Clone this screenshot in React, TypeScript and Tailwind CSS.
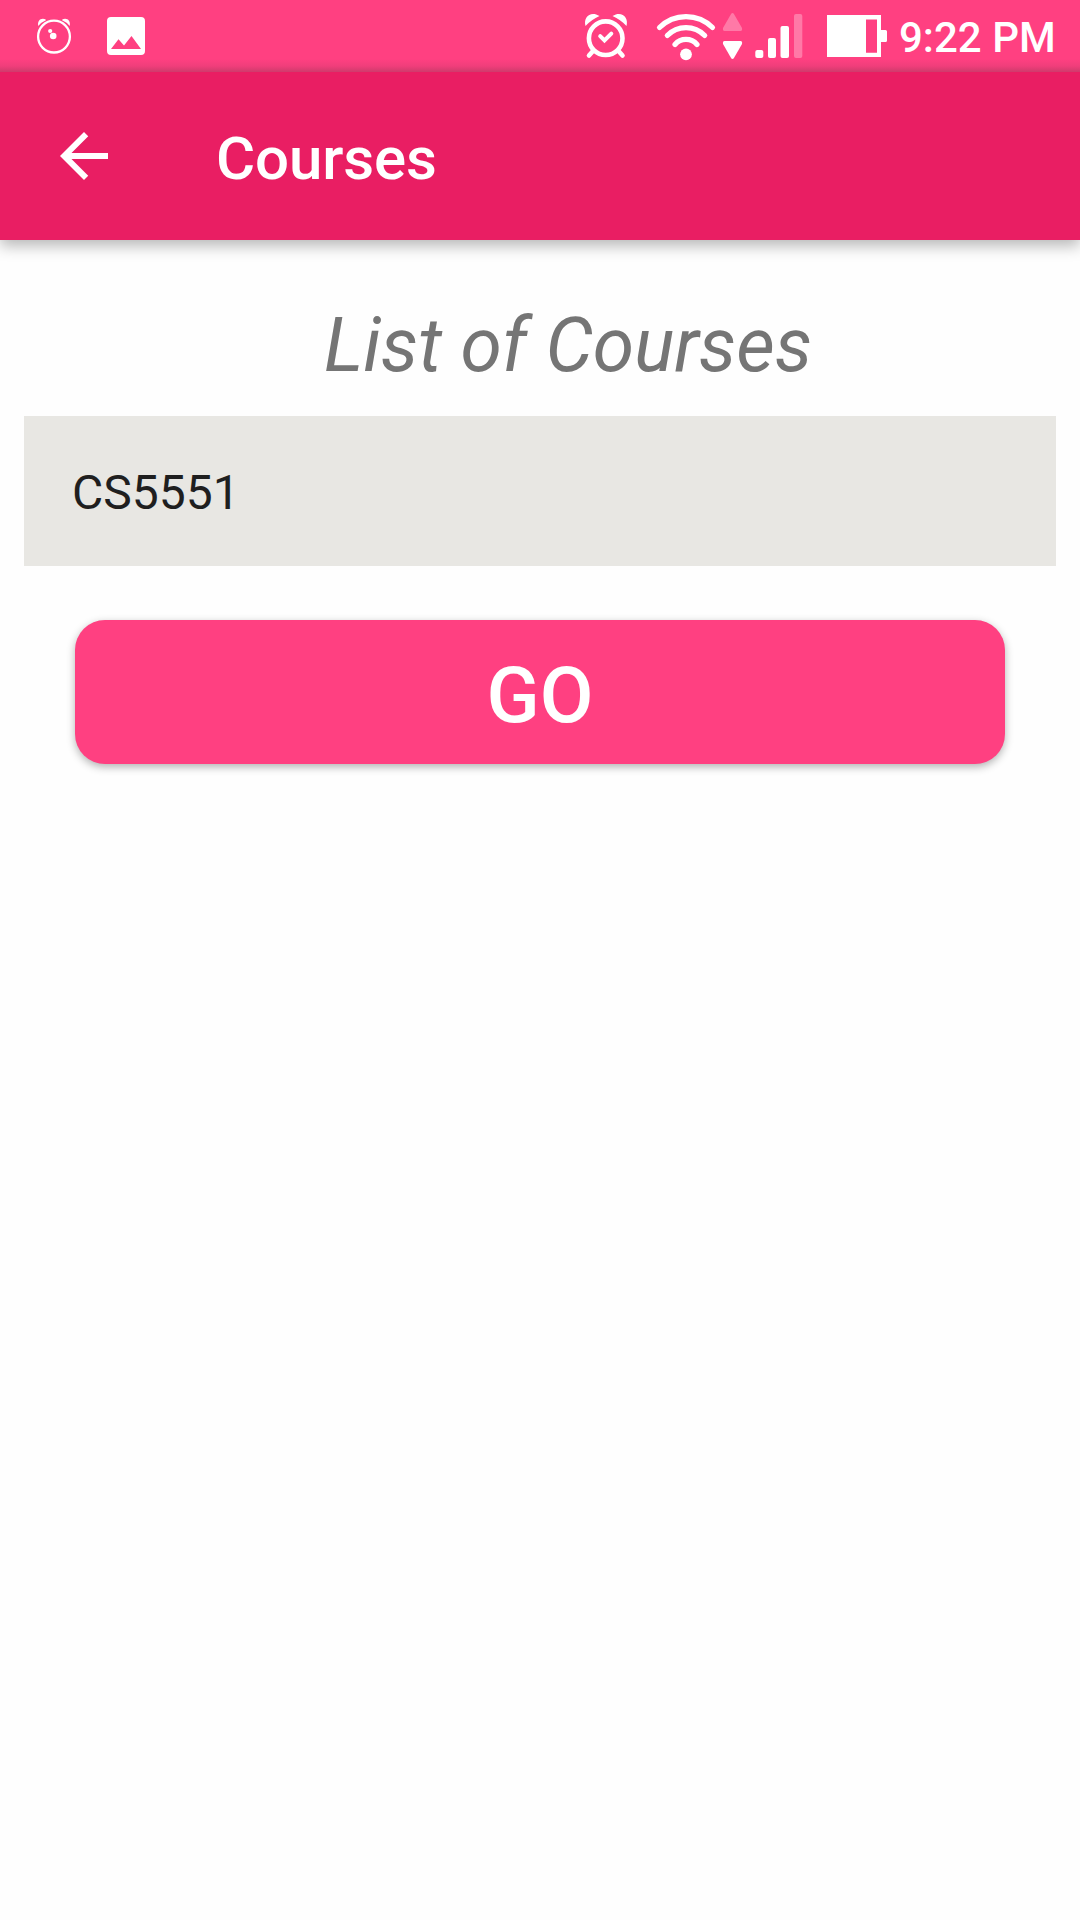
import React from "react";

function LeftIcons() {
  return (
    <svg className="h-[72px] w-[150px]" viewBox="20 0 150 72" fill="#fff">
      <path d="M38.300 26C37 20 42 17 46.300 20Q41.500 22 38.300 26ZM69.700 26C71 20 66 17 61.700 20Q66.500 22 69.700 26Z" />
      <circle cx="54" cy="36.600" r="15.900" fill="none" stroke="#fff" strokeWidth="2.300" />
      <circle cx="53.200" cy="36" r="3.300" />
      <circle cx="50.200" cy="31" r="2.100" />
      <path
        fillRule="evenodd"
        d="M111 17H141Q145 17 145 21V51Q145 55 141 55H111Q107 55 107 51V21Q107 17 111 17ZM111 49H141L131.500 36L124 45.500L118.500 39.300Z"
      />
    </svg>
  );
}

function RightIcons() {
  return (
    <svg className="h-[72px] w-[322px]" viewBox="570 0 322 72" fill="#fff">
      <path d="M585.500 26C583 16.500 591 10.500 599.500 16Q591.500 19.500 585.500 26ZM626.500 26C629 16.500 621 10.500 612.500 16Q620.500 19.500 626.500 26Z" />
      <g fill="none" stroke="#fff" strokeLinecap="round">
        <circle cx="605.700" cy="38.200" r="16.800" strokeWidth="4.600" />
        <path d="M593 51L589 55.500M618.500 51L622.500 55.500" strokeWidth="4.600" />
        <path d="M600.200 36.200L604.500 40.500L611.300 33.700" strokeWidth="4" />
        <path d="M659.500 27.500A37.500 37.500 0 0 1 712.500 27.500" strokeWidth="5.200" />
        <path d="M667.300 35.500A26 26 0 0 1 704.700 35.500" strokeWidth="5.200" />
        <path d="M675 44.500A14.500 14.500 0 0 1 697 44.500" strokeWidth="5.200" />
      </g>
      <circle cx="686" cy="54.300" r="5.900" />
      <path d="M731.200 13.800Q732.500 12.200 733.800 13.800L742 28Q742.500 31 740.500 31H724.500Q722.500 31 723 28Z" opacity=".3" />
      <path d="M731.200 58.200Q732.500 59.800 733.800 58.200L742 44Q742.500 41 740.500 41H724.500Q722.500 41 723 44Z" />
      <rect x="755.300" y="50" width="8" height="8" rx="2" />
      <rect x="768" y="38" width="8" height="20" rx="2" />
      <rect x="780.500" y="26" width="8.500" height="32" rx="2" />
      <rect x="794" y="14" width="8.300" height="44" rx="2" opacity=".3" />
      <path fillRule="evenodd" d="M827 15H881V30H885.500Q887 30 887 31.500V40.500Q887 42 885.500 42H881V57H827ZM866 19.500V52.700H877V19.500Z" />
    </svg>
  );
}

function StatusBar() {
  return (
    <div className="flex h-[72px] items-center bg-[#ff4081] bg-linear-to-t from-[#cf3a6c] via-[#f03e7b] via-[6px] to-[#ff4081] to-[13px] pl-5 text-white">
      <LeftIcons />
      <div className="ml-auto flex items-center">
        <RightIcons />
        <span className="w-[188px] pt-[3px] pl-[7px] text-[42px] leading-[60px] font-medium whitespace-nowrap">9:22 PM</span>
      </div>
    </div>
  );
}

export default function App() {
  return (
    <div className="flex h-[1920px] w-[1080px] flex-col overflow-hidden bg-[#fefefe] font-[Roboto,sans-serif]">
      <StatusBar />
      <header className="flex h-[168px] items-center bg-[#e91e63] text-white shadow-[0_6px_14px_rgba(0,0,0,0.28)] [clip-path:inset(0_0_-30px_0)]">
        <button className="pl-12" aria-label="Back">
          <svg className="size-[72px]" viewBox="0 0 24 24" fill="#fff">
            <path d="M20 11H7.830l5.590-5.590L12 4l-8 8 8 8 1.410-1.410L7.830 13H20v-2z" />
          </svg>
        </button>
        <h1 className="pt-[6px] pl-24 text-[60px] leading-[70px] font-medium tracking-[-0.15px]">Courses</h1>
      </header>
      <main className="flex flex-col">
        <h2 className="h-[176px] pt-[60px] pl-[324px] text-[75px] leading-[90px] tracking-[-0.05px] text-[#757575] italic">List of Courses</h2>
        <div className="mx-6 flex h-[150px] items-center bg-[#e8e7e3] pt-[4px] pl-12 text-[48px] text-[#1f1f1f]">CS5551</div>
        <button className="mx-[75px] mt-[54px] flex h-[144px] items-center justify-center rounded-[30px] bg-[#ff4081] pt-[8px] text-[78px] leading-[90px] font-medium text-white shadow-[0_3px_8px_rgba(0,0,0,0.3)]">
          GO
        </button>
      </main>
    </div>
  );
}
